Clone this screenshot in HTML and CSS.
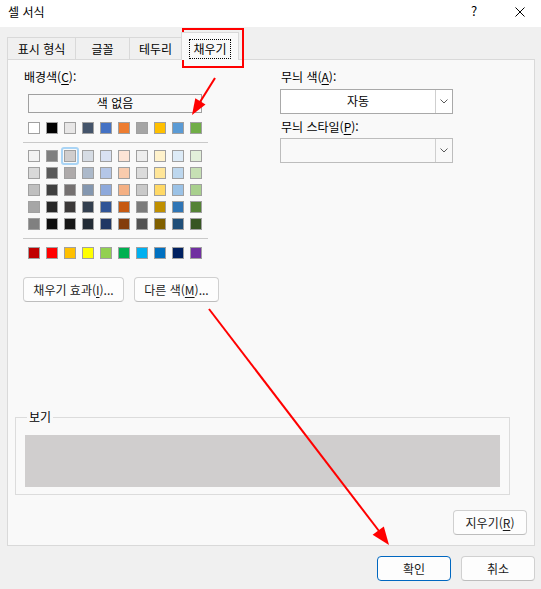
FILE: index.html
```html
<!DOCTYPE html>
<html lang="ko">
<head>
  <meta charset="UTF-8" />
  <title>셀 서식</title>
  <link rel="stylesheet" href="styles.css">
</head>
<body>
<div class="dialog">
  <div class="titlebar">
    <span class="title">셀 서식</span>
    <span class="help">?</span>
    <span class="close">
      <svg width="10" height="10" viewBox="0 0 10 10"><path d="M0.5 0.5L9.5 9.5M9.5 0.5L0.5 9.5" stroke="#000" stroke-width="1" fill="none"/></svg>
    </span>
  </div>

  <div class="tabs">
    <div class="tab tab-first">표시 형식</div>
    <div class="tab tab-font">글꼴</div>
    <div class="tab tab-border">테두리</div>
    <div class="tab tab-active"><span class="focus">채우기</span></div>
  </div>

  <div class="panel">
    <div class="cols">
      <div class="left">
        <div class="label">배경색(<u>C</u>):</div>
        <div class="none-btn">색 없음</div>
        <div class="swatch-row" id="themeRow"></div>
        <div class="sep"></div>
        <div class="swatch-grid" id="tintGrid"></div>
        <div class="sep sep-2"></div>
        <div class="swatch-row" id="stdRow"></div>
        <div class="btn-row">
          <button class="btn btn-effect">채우기 효과(<u>I</u>)...</button>
          <button class="btn btn-more">다른 색(<u>M</u>)...</button>
        </div>
      </div>
      <div class="right">
        <div class="label">무늬 색(<u>A</u>):</div>
        <div class="combo">
          <div class="combo-text">자동</div>
          <div class="combo-arrow"><svg width="8" height="5" viewBox="0 0 8 5"><path d="M0.5 0.5L4 4L7.5 0.5" stroke="#5a5a5a" fill="none"/></svg></div>
        </div>
        <div class="label label-2">무늬 스타일(<u>P</u>):</div>
        <div class="combo combo-off">
          <div class="combo-text"></div>
          <div class="combo-arrow"><svg width="8" height="5" viewBox="0 0 8 5"><path d="M0.5 0.5L4 4L7.5 0.5" stroke="#5a5a5a" fill="none"/></svg></div>
        </div>
      </div>
    </div>

    <fieldset class="preview">
      <legend>보기</legend>
      <div class="preview-box"></div>
    </fieldset>

    <div class="clear-row">
      <button class="btn btn-clear">지우기(<u>R</u>)</button>
    </div>
  </div>

  <div class="footer">
    <button class="btn btn-ok">확인</button>
    <button class="btn btn-cancel">취소</button>
  </div>

  <svg class="marks" width="541" height="589" viewBox="0 0 541 589">
    <rect x="183" y="29" width="60" height="38" fill="none" stroke="#ff0000" stroke-width="2"/>
    <line x1="215" y1="78" x2="200" y2="102" stroke="#ff0000" stroke-width="2"/>
    <polygon points="192,115 195.3,98.2 205.5,104.6" fill="#ff0000"/>
    <line x1="209" y1="309" x2="379" y2="531" stroke="#ff0000" stroke-width="2"/>
    <polygon points="389,545 372.6,534.8 383.8,526.4" fill="#ff0000"/>
  </svg>
</div>

<script>
  const theme = ['#ffffff','#000000','#e7e6e6','#44546a','#4472c4','#ed7d31','#a5a5a5','#ffc000','#5b9bd5','#70ad47'];
  const tints = [
    ['#f2f2f2','#7f7f7f','#d0cece','#d6dce4','#d9e1f2','#fce4d6','#ededed','#fff2cc','#ddebf7','#e2efda'],
    ['#d9d9d9','#595959','#aeaaaa','#acb9ca','#b4c6e7','#f8cbad','#dbdbdb','#ffe699','#bdd7ee','#c6e0b4'],
    ['#bfbfbf','#404040','#757171','#8497b0','#8ea9db','#f4b084','#c9c9c9','#ffd966','#9bc2e6','#a9d08e'],
    ['#a6a6a6','#262626','#3a3838','#333f4f','#305496','#c65911','#7b7b7b','#bf8f00','#2f75b5','#548235'],
    ['#808080','#0d0d0d','#161616','#222b35','#203764','#833c0c','#525252','#806000','#1f4e78','#375623']
  ];
  const std = ['#c00000','#ff0000','#ffc000','#ffff00','#92d050','#00b050','#00b0f0','#0070c0','#002060','#7030a0'];

  function swatch(c, sel){
    const d=document.createElement('div');
    d.className='swatch'+(sel?' selected':'');
    d.style.background=c;
    return d;
  }
  theme.forEach(c=>document.getElementById('themeRow').append(swatch(c)));
  tints.forEach((row,r)=>row.forEach((c,i)=>document.getElementById('tintGrid').append(swatch(c, r===0&&i===2))));
  std.forEach(c=>document.getElementById('stdRow').append(swatch(c)));
</script>
</body>
</html>
```

FILE: styles.css
```css
body {margin: 0; background: #f0f0f0; font-family: "Noto Sans CJK KR", "Noto Sans", sans-serif; font-size: 12px; color: #000;}
u {text-decoration-thickness: 1px; text-underline-offset: 2px;}
.dialog {position: relative; width: 541px; height: 589px; background: #f0f0f0; overflow: hidden;}

/* title bar */
.titlebar {height: 27px; background: #fff; display: flex; align-items: flex-start;}
.title {flex: 1; padding: 4px 0 0 8px; line-height: 16px;}
.help {width: 50px; padding-top: 3px; line-height: 16px; font-size: 13px; text-align: center;}
.close {width: 42px; padding-top: 7px; display: flex; justify-content: center;}
.close svg {display: block;}

/* tabs */
.tabs {display: flex; align-items: flex-end; height: 22px; margin: 10px 0 0 7px; position: relative; z-index: 1;}
.tab {box-sizing: border-box; height: 22px; border: 1px solid #d9d9d9; border-left: none; border-bottom: none; display: flex; align-items: center; justify-content: center; background: #f0f0f0; line-height: 16px;}
.tab-first {width: 69px; border-left: 1px solid #d9d9d9;}
.tab-font {width: 54px;}
.tab-border {width: 52px;}
.tab-active {width: 58px; height: 28px; margin-bottom: -1px; background: #f9f9f9; padding-top: 4px; border-left: 1px solid #d9d9d9; margin-left: -1px;}
.focus {outline: 1px dotted #000; outline-offset: 0; padding: 1px 3px;}

/* panel */
.panel {box-sizing: border-box; width: 528px; height: 487px; margin-left: 7px; background: #f9f9f9; border: 1px solid #d9d9d9; padding: 9px 0 0 15px; display: flex; flex-direction: column;}
.cols {display: flex;}
.left {width: 257px;}
.right {width: 173px;}
.label {line-height: 16px; padding-left: 1px; height: 16px;}
.label-2 {margin-top: 5px;}

.none-btn {box-sizing: border-box; width: 174px; height: 19px; margin: 9px 0 0 5px; border: 1px solid #a0a0a0; text-align: center; line-height: 16px;}
.swatch-row {display: flex; gap: 6px; margin: 9px 0 0 5px;}
.swatch-grid {display: grid; grid-template-columns: repeat(10, 12px); column-gap: 6px; row-gap: 5px; margin: 7px 0 0 5px;}
.swatch {box-sizing: border-box; width: 12px; height: 12px; border: 1px solid #a0a0a0; position: relative;}
.swatch.selected::after {content: ""; position: absolute; inset: -4px; border: 2px solid #a9d4f5; border-radius: 3px;}
.sep {width: 185px; height: 1px; background: #c9c9c9; margin-top: 8px;}
.sep-2 {margin-top: 8px;}
#stdRow {margin-top: 8px;}

.btn {box-sizing: border-box; height: 25px; padding: 0; border: 1px solid #d0d0d0; border-bottom-color: #bdbdbd; border-radius: 4px; background: #fdfdfd; font: inherit; color: #1a1a1a; line-height: 16px; text-align: center;}
.btn-row {display: flex; gap: 10px; margin-top: 18px;}
.btn-effect {width: 101px;}
.btn-more {width: 85px;}

.combo {box-sizing: border-box; display: flex; width: 173px; height: 25px; margin-top: 4px; border: 1px solid #a9a9a9; background: #fff;}
.combo-text {flex: 1; text-align: center; line-height: 22px;}
.combo-arrow {width: 16px; border-left: 1px solid #cfcfcf; display: flex; align-items: center; justify-content: center;}
.combo-arrow svg {display: block;}
.combo-off {margin-top: 3px; background: #f9f9f9; border-color: #bdbdbd;}

/* preview */
.preview {box-sizing: border-box; width: 495px; margin: 107px 0 0 -8px; padding: 10px 9px 7px 9px; border: 1px solid #dcdcdc; min-width: 0;}
.preview legend {padding: 0 2px; margin-left: 2px; line-height: 16px;}
.preview-box {height: 52px; background: #d0cece;}

.clear-row {display: flex; justify-content: flex-end; margin-top: 15px; padding-right: 7px;}
.btn-clear {width: 74px;}

/* footer */
.footer {display: flex; justify-content: flex-end; gap: 10px; margin-top: 10px; padding-right: 6px;}
.btn-ok {width: 74px; height: 25px; border: 1px solid #0067c0;}
.btn-cancel {width: 74px;}

.marks {position: absolute; top: 0; left: 0; pointer-events: none;}
```
